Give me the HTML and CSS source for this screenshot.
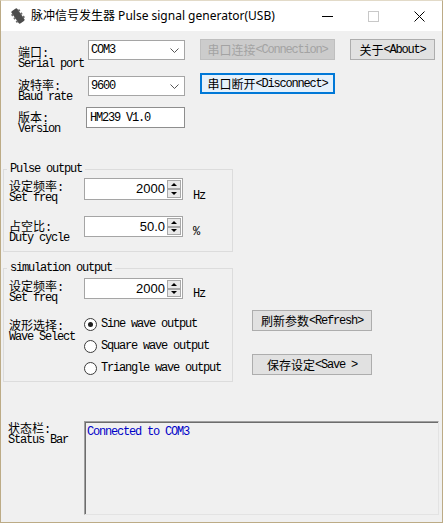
FILE: index.html
```html
<!DOCTYPE html>
<html lang="zh-CN">
<head>
<meta charset="utf-8">
<title>脉冲信号发生器</title>
<link rel="stylesheet" href="styles.css">
</head>
<body>
<div class="window">
  <div class="titlebar">
    <svg class="appicon" width="14" height="18" viewBox="0 0 14 18">
      <g transform="rotate(-35 7 9)">
        <rect x="3.5" y="1.5" width="7" height="15" rx="1.5" fill="#4b4b4b"/>
        <rect x="2" y="4" width="2" height="2" fill="#6a6a6a"/>
        <rect x="2" y="8" width="2" height="2" fill="#6a6a6a"/>
        <rect x="2" y="12" width="2" height="2" fill="#6a6a6a"/>
        <rect x="10" y="4" width="2" height="2" fill="#6a6a6a"/>
        <rect x="10" y="8" width="2" height="2" fill="#6a6a6a"/>
        <rect x="10" y="12" width="2" height="2" fill="#6a6a6a"/>
      </g>
    </svg>
    <span class="title">脉冲信号发生器 Pulse signal generator(USB)</span>
    <div class="winctl">
      <span class="wbtn"><svg width="11" height="11" viewBox="0 0 11 11"><path d="M0 5.5H11" stroke="#000" stroke-width="1"/></svg></span>
      <span class="wbtn"><svg width="11" height="11" viewBox="0 0 11 11"><rect x="0.5" y="0.5" width="10" height="10" fill="none" stroke="#c8c8c8"/></svg></span>
      <span class="wbtn"><svg width="11" height="11" viewBox="0 0 11 11"><path d="M0.5 0.5L10.5 10.5M10.5 0.5L0.5 10.5" stroke="#000" stroke-width="1"/></svg></span>
    </div>
  </div>

  <div class="client">
    <div class="top">
      <div class="form">
        <div class="frow r1">
          <div class="lbl l1"><div class="zh">端口<span class="m">:</span></div><div class="m">Serial port</div></div>
          <div class="combo c1"><span class="m">COM3</span><svg width="9" height="5" viewBox="0 0 9 5"><path d="M0.5 0.5L4.5 4.5L8.5 0.5" fill="none" stroke="#555"/></svg></div>
        </div>
        <div class="frow r2">
          <div class="lbl l2"><div class="zh">波特率<span class="m">:</span></div><div class="m">Baud rate</div></div>
          <div class="combo c2"><span class="m">9600</span><svg width="9" height="5" viewBox="0 0 9 5"><path d="M0.5 0.5L4.5 4.5L8.5 0.5" fill="none" stroke="#555"/></svg></div>
        </div>
        <div class="frow r3">
          <div class="lbl l3"><div class="zh">版本<span class="m">:</span></div><div class="m">Version</div></div>
          <div class="textbox"><span class="m">HM239 V1.0</span></div>
        </div>
      </div>
      <div class="actions">
        <div class="btnrow">
          <div class="btn disabled connect">串口连接<span class="m">&lt;Connection&gt;</span></div>
          <div class="btn about">关于<span class="m">&lt;About&gt;</span></div>
        </div>
        <div class="btn focused disconnect">串口断开<span class="m">&lt;Disconnect&gt;</span></div>
      </div>
    </div>

    <div class="middle">
      <div class="groups">
        <div class="group pulse">
          <div class="legend"><span class="m">Pulse output</span></div>
          <div class="grow ga">
            <div class="lbl gl1"><div class="zh">设定频率<span class="m">:</span></div><div class="m">Set freq</div></div>
            <div class="spin"><span class="val">2000</span><span class="sbtns"><span class="sb"><i class="up"></i></span><span class="sb"><i class="dn"></i></span></span></div>
            <span class="unit m u1">Hz</span>
          </div>
          <div class="grow gb">
            <div class="lbl gl2"><div class="zh">占空比<span class="m">:</span></div><div class="m">Duty cycle</div></div>
            <div class="spin"><span class="val">50.0</span><span class="sbtns"><span class="sb"><i class="up"></i></span><span class="sb"><i class="dn"></i></span></span></div>
            <span class="unit m u2">%</span>
          </div>
        </div>

        <div class="group sim">
          <div class="legend"><span class="m">simulation output</span></div>
          <div class="grow sa">
            <div class="lbl gl1"><div class="zh">设定频率<span class="m">:</span></div><div class="m">Set freq</div></div>
            <div class="spin sspin"><span class="val">2000</span><span class="sbtns"><span class="sb"><i class="up"></i></span><span class="sb"><i class="dn"></i></span></span></div>
            <span class="unit m u3">Hz</span>
          </div>
          <div class="grow sb2">
            <div class="lbl gl3"><div class="zh">波形选择<span class="m">:</span></div><div class="m">Wave Select</div></div>
            <div class="radios">
              <div class="radio"><span class="dot on"></span><span class="m">Sine wave output</span></div>
              <div class="radio"><span class="dot"></span><span class="m">Square wave output</span></div>
              <div class="radio"><span class="dot"></span><span class="m">Triangle wave output</span></div>
            </div>
          </div>
        </div>
      </div>
      <div class="side">
        <div class="btn refresh">刷新参数<span class="m">&lt;Refresh&gt;</span></div>
        <div class="btn save">保存设定<span class="m">&lt;Save &gt;</span></div>
      </div>
    </div>

    <div class="status">
      <div class="lbl sl"><div class="zh">状态栏<span class="m">:</span></div><div class="m">Status Bar</div></div>
      <div class="statusbox"><span class="m">Connected to COM3</span></div>
    </div>
  </div>
</div>
</body>
</html>
```

FILE: styles.css
```css
* { box-sizing: border-box; margin: 0; padding: 0; }
html, body { width: 445px; height: 525px; overflow: hidden; background: #ffffff; }

.window {
  width: 443px;
  height: 523px;
  border: 1px solid #bcab86;
  border-top-color: #e2dac8;
  background: #f0f0f0;
  display: flex;
  flex-direction: column;
  font-family: "Noto Sans CJK SC", sans-serif;
  font-size: 12px;
  color: #000;
}

.m {
  font-family: "Liberation Mono", monospace;
  font-size: 12px;
  letter-spacing: -1.2px;
  white-space: pre;
}

/* title bar */
.titlebar {
  height: 30px;
  flex: none;
  background: #fff;
  display: flex;
  align-items: center;
  padding-left: 10px;
}
.appicon { display: block; }
.title {
  margin-left: 6px;
  font-family: "Noto Sans", "Noto Sans CJK SC", sans-serif;
  font-size: 12px;
  line-height: 16px;
  color: #000;
}
.winctl { margin-left: auto; display: flex; height: 30px; }
.wbtn { width: 46px; height: 30px; display: flex; align-items: center; justify-content: center; }
.wbtn svg { display: block; }

/* client */
.client { flex: 1; display: flex; flex-direction: column; }

.lbl .zh { font-size: 12px; line-height: 13px; height: 13px; white-space: nowrap; }
.lbl > .m { display: block; line-height: 12px; }

.top { display: flex; height: 130px; margin-top: 8px; padding-left: 17px; flex: none; }
.form { width: 168px; }
.frow { display: flex; align-items: flex-start; }
.r1 { height: 34px; }
.r2 { height: 33px; }
.r3 { height: 30px; }
.lbl { width: 70px; flex: none; }
.l1 { margin-top: 6px; }
.l2 { margin-top: 5px; }
.l3 { margin-top: 4px; }

.combo {
  width: 97px;
  height: 20px;
  background: #fff;
  border: 1px solid #a5a5a5;
  display: flex;
  align-items: center;
  justify-content: space-between;
  padding: 0 5px 0 2px;
}
.combo svg { display: block; }
.c1 { margin-top: 1px; }
.c2 { margin-top: 3px; }

.textbox {
  width: 99px;
  height: 21px;
  margin-left: -2px;
  margin-top: 1px;
  background: #fff;
  border: 1px solid #8e8e8e;
  padding-left: 3px;
  display: flex;
  align-items: center;
}

.actions { margin-left: 14px; display: flex; flex-direction: column; }
.btnrow { display: flex; gap: 15px; }

.btn {
  height: 21px;
  background: #e1e1e1;
  border: 1px solid #adadad;
  display: flex;
  align-items: center;
  justify-content: center;
  font-size: 12px;
  line-height: 14px;
  white-space: nowrap;
}
.connect { width: 135px; }
.about { width: 85px; }
.disabled { background: #cccccc; border-color: #bfbfbf; color: #a3a3a3; }
.disconnect { width: 135px; margin-top: 13px; }
.focused { border: 2px solid #0078d7; background: #e5f1fb; }

/* middle */
.middle { display: flex; padding-left: 2px; flex: none; }
.groups { width: 230px; }
.group { border: 1px solid #dcdcdc; padding-left: 5px; }
.pulse { height: 83px; }
.sim { height: 114px; margin-top: 16px; }

.legend {
  display: block;
  width: max-content;
  margin-top: -7px;
  margin-left: -2px;
  padding: 0 3px;
  height: 12px;
  line-height: 12px;
  background: #f0f0f0;
}
.legend .m { line-height: 12px; display: block; }

.grow { display: flex; align-items: flex-start; }
.grow .lbl { width: 75px; }
.ga { height: 22px; margin-top: 3px; }
.gb { height: 21px; margin-top: 16px; }
.sa { height: 21px; margin-top: 4px; }
.sb2 { height: 66px; margin-top: 14px; }
.gl1 { margin-top: 1px; }
.gb .gl2 { margin-top: 3px; }
.gl3 { margin-top: 5px; }

.spin {
  width: 99px;
  height: 22px;
  background: #fff;
  border: 1px solid #a5a5a5;
  display: flex;
  align-items: stretch;
  flex: none;
}
.gb .spin, .sspin { height: 21px; }
.spin .val {
  flex: 1;
  text-align: right;
  font-family: "Liberation Sans", sans-serif;
  font-size: 13px;
  line-height: 19px;
  padding-right: 1px;
}
.sbtns {
  width: 16px;
  display: flex;
  flex-direction: column;
  padding: 1px;
}
.sb {
  flex: 1;
  border: 1px solid #a8a8a8;
  background: #e9e9e9;
  display: flex;
  align-items: center;
  justify-content: center;
}
.sb i { display: block; width: 0; height: 0; border-left: 3px solid transparent; border-right: 3px solid transparent; }
.sb .up { border-bottom: 3px solid #000; }
.sb .dn { border-top: 3px solid #000; }

.unit { margin-left: 10px; line-height: 12px; }
.u1 { margin-top: 12px; }
.u2 { margin-top: 10px; }
.u3 { margin-top: 10px; }

.radios { display: flex; flex-direction: column; }
.radio { display: flex; align-items: center; height: 22px; }
.radio .m { margin-left: 4px; line-height: 12px; }
.dot {
  width: 13px;
  height: 13px;
  border: 1px solid #3c3c3c;
  border-radius: 50%;
  background: #fff;
  display: flex;
  align-items: center;
  justify-content: center;
}
.dot.on::after {
  content: "";
  width: 5px;
  height: 5px;
  border-radius: 50%;
  background: #1e1e1e;
}

.side { margin-left: 19px; display: flex; flex-direction: column; }
.refresh { width: 120px; margin-top: 141px; }
.save { width: 120px; margin-top: 23px; }

/* status */
.status { display: flex; margin-top: 39px; padding-left: 7px; flex: none; }
.sl { width: 76px; margin-top: 0; }
.statusbox {
  width: 355px;
  height: 94px;
  border: 1px solid;
  border-color: #a0a0a0 #e3e3e3 #e3e3e3 #a0a0a0;
  box-shadow: inset 1px 1px 0 #6d6d6d;
  background: #f0f0f0;
  padding: 4px 0 0 2px;
  color: #0000c8;
}
.statusbox .m { line-height: 12px; display: block; }
```
